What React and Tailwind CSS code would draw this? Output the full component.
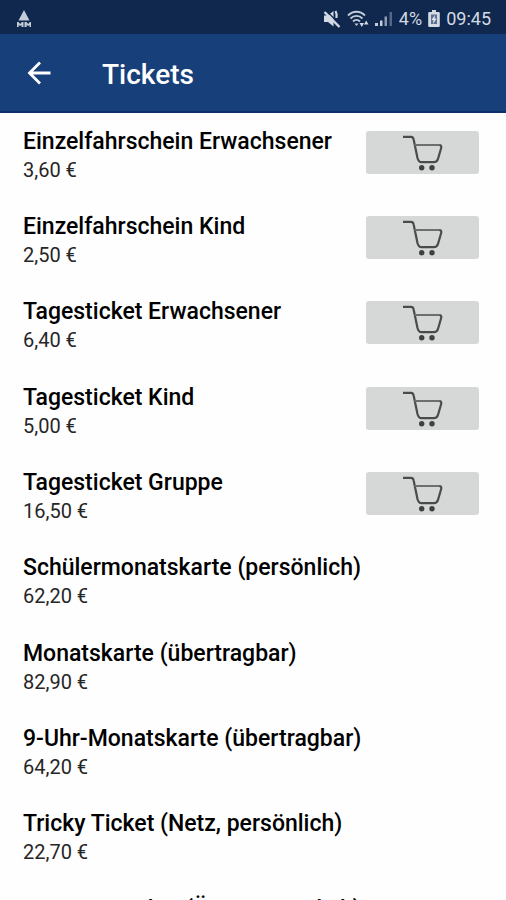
import React from "react";

const tickets = [
  { name: "Einzelfahrschein Erwachsener", price: "3,60 €", buyable: true },
  { name: "Einzelfahrschein Kind", price: "2,50 €", buyable: true },
  { name: "Tagesticket Erwachsener", price: "6,40 €", buyable: true },
  { name: "Tagesticket Kind", price: "5,00 €", buyable: true },
  { name: "Tagesticket Gruppe", price: "16,50 €", buyable: true },
  { name: "Schülermonatskarte (persönlich)", price: "62,20 €" },
  { name: "Monatskarte (übertragbar)", price: "82,90 €" },
  { name: "9-Uhr-Monatskarte (übertragbar)", price: "64,20 €" },
  { name: "Tricky Ticket (Netz, persönlich)", price: "22,70 €" },
  { name: "Semesterticket (Ü26, persönlich)", price: "44,90 €" },
];

function AppBadge() {
  return (
    <svg className="h-[18px] w-4" viewBox="0 0 16 18" fill="#c3ccd9" aria-hidden="true">
      <path d="M8 0 13.500 10.500h-11Z" />
      <path d="M1 17v-5h1.500l1.700 2 1.700-2H7v5H5.500v-2L4.200 16 2.700 14.700V17ZM9 17v-5h1.500l1.700 2 1.700-2H15v5h-1.500v-2L12.200 16l-1.500-1.300V17ZM7.500 12h1v5h-1z" />
    </svg>
  );
}

function MutedIcon() {
  return (
    <svg className="h-[18px] w-[18px]" viewBox="0 0 18 18" fill="#d3dae4" aria-hidden="true">
      <path d="M1 5.500h4L10.500 1v15.500L5 12H1Z" />
      <path d="M12.500 1c1 1.500 1.300 4 1 7" fill="none" stroke="#d3dae4" strokeWidth="2.200" />
      <path d="M3.500 1 17.500 15" stroke="#10284d" strokeWidth="1.200" />
      <path d="M1.500 2 16.500 17" stroke="#d3dae4" strokeWidth="2.400" />
    </svg>
  );
}

function WifiIcon() {
  return (
    <svg className="h-[18px] w-[22px]" viewBox="0 0 22 18" fill="none" stroke="#c3ccd9" strokeWidth="1.800" aria-hidden="true">
      <path d="M1 5.500c5-5 12-5 17 0M3.500 8.500c3.500-3.500 8.500-3.500 12 0M6 11.500c2-2 5-2 7 0" />
      <path d="M7.500 13.500h4l-2 2.500Z" fill="#c3ccd9" stroke="none" />
      <path d="M12.500 13h4.500l-2.200 4ZM17 14.500h4.500L19.200 10.500Z" fill="#d3dae4" stroke="none" />
    </svg>
  );
}

function SignalIcon() {
  return (
    <svg className="h-[18px] w-[18px]" viewBox="0 0 18 18" aria-hidden="true">
      <path d="M0 16v-3h3v3ZM5 16v-5.500h2.500V16Z" fill="#c3ccd9" />
      <path d="M9.500 16V6.500H12V16Z" fill="#8d9bb2" />
      <path d="M14.500 16V2H17v14Z" fill="#53678a" />
    </svg>
  );
}

function BatteryIcon() {
  return (
    <svg className="h-[18px] w-3" viewBox="0 0 12 18" aria-hidden="true">
      <path d="M4 0h4v2h2.500q1.300 0 1.300 1v13q0 1-1.300 1h-9q-1.300 0-1.300-1V3q0-1 1.300-1H4Z" fill="#d3dae4" />
      <path d="M3 4.500h6v9.500H3Z" fill="#5f7190" />
      <path d="M7 5 3.500 10h2L5 14l3.500-5.500h-2Z" fill="#e4e9ef" />
    </svg>
  );
}

function BackIcon() {
  return (
    <svg className="h-6 w-6" viewBox="0 0 24 24" fill="none" stroke="#fff" strokeWidth="2.800" aria-hidden="true">
      <path d="M23.500 12H2.500M13 1.500 2.500 12 13 22.500" />
    </svg>
  );
}

function CartIcon() {
  return (
    <svg className="h-9 w-10" viewBox="0 0 40 36" fill="none" stroke="#4a4c4c" strokeLinejoin="round" aria-hidden="true">
      <path d="M0 1.800h8c1.700 0 2.300.8 2.600 2.500L14.500 23c.7 2.800 1.800 4.200 4 4.200h12.500c2.200 0 3.200-1 3.900-3l3.200-11c.6-2-.1-3.200-2-3.200" strokeWidth="2.200" />
      <path d="M11.500 10h25" stroke="#6c6f6f" strokeWidth="2" />
      <circle cx="18.700" cy="32.700" r="2.700" fill="#3f4141" stroke="none" />
      <circle cx="29" cy="32.700" r="2.700" fill="#3f4141" stroke="none" />
    </svg>
  );
}

function TicketRow({ name, price, buyable }) {
  return (
    <li className="flex h-[85px] items-start justify-between nth-[3n]:h-[86px]">
      <div className="whitespace-nowrap">
        <h2 className="text-[23px] leading-[30px] font-medium text-black">{name}</h2>
        <p className="text-[20px] leading-[26px] text-[#262626]">{price}</p>
      </div>
      {buyable && (
        <button
          type="button"
          aria-label={`${name} kaufen`}
          className="mt-1 flex h-[43px] w-[113px] shrink-0 items-center justify-center rounded-[3px] bg-[#d5d8d7]"
        >
          <CartIcon />
        </button>
      )}
    </li>
  );
}

export default function App() {
  return (
    <div className="h-screen overflow-hidden bg-[#fefefe] font-['Roboto','Noto_Sans',sans-serif]">
      <div className="flex h-[34px] items-center justify-between bg-[#10284d] pt-1 pr-[15px] pl-4">
        <AppBadge />
        <div className="flex items-center gap-1.5 text-[18px] leading-6 text-[#d3dae4]">
          <MutedIcon />
          <WifiIcon />
          <SignalIcon />
          <span>4%</span>
          <BatteryIcon />
          <span>09:45</span>
        </div>
      </div>
      <header className="flex h-[79px] items-center gap-[51px] border-b-2 border-[#10306a] bg-[#173f7a] pl-[27px]">
        <button type="button" aria-label="Zurück">
          <BackIcon />
        </button>
        <h1 className="pt-1 text-[28px] leading-9 font-medium text-white">Tickets</h1>
      </header>
      <main className="pt-[14px] pr-[27px] pl-[23px]">
        <ul>
          {tickets.map((ticket) => (
            <TicketRow key={ticket.name} {...ticket} />
          ))}
        </ul>
      </main>
    </div>
  );
}
